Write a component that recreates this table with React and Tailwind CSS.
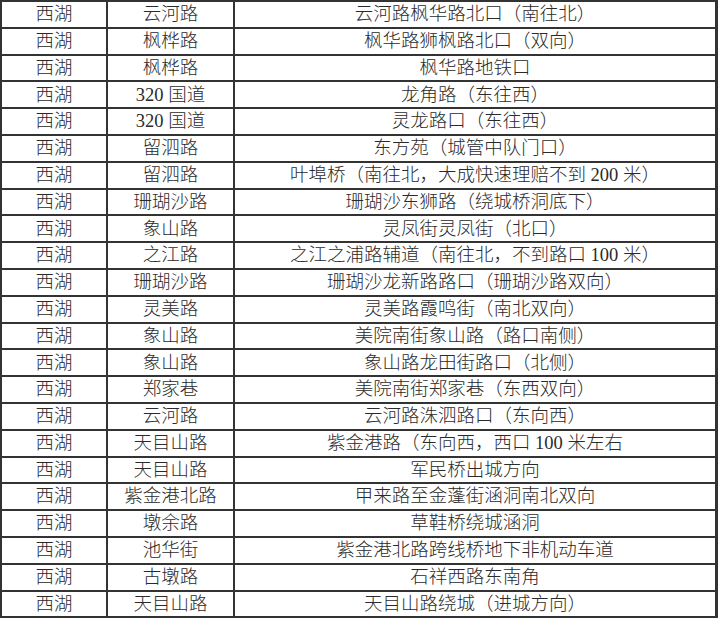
import React from 'react';

// 西湖区点位表
const rows = [
  ['西湖', '云河路', '云河路枫华路北口（南往北）'],
  ['西湖', '枫桦路', '枫华路狮枫路北口（双向）'],
  ['西湖', '枫桦路', '枫华路地铁口'],
  ['西湖', '320 国道', '龙角路（东往西）'],
  ['西湖', '320 国道', '灵龙路口（东往西）'],
  ['西湖', '留泗路', '东方苑（城管中队门口）'],
  ['西湖', '留泗路', '叶埠桥（南往北，大成快速理赔不到 200 米）'],
  ['西湖', '珊瑚沙路', '珊瑚沙东狮路（绕城桥洞底下）'],
  ['西湖', '象山路', '灵凤街灵凤街（北口）'],
  ['西湖', '之江路', '之江之浦路辅道（南往北，不到路口 100 米）'],
  ['西湖', '珊瑚沙路', '珊瑚沙龙新路路口（珊瑚沙路双向）'],
  ['西湖', '灵美路', '灵美路霞鸣街（南北双向）'],
  ['西湖', '象山路', '美院南街象山路（路口南侧）'],
  ['西湖', '象山路', '象山路龙田街路口（北侧）'],
  ['西湖', '郑家巷', '美院南街郑家巷（东西双向）'],
  ['西湖', '云河路', '云河路洙泗路口（东向西）'],
  ['西湖', '天目山路', '紫金港路（东向西，西口 100 米左右'],
  ['西湖', '天目山路', '军民桥出城方向'],
  ['西湖', '紫金港北路', '甲来路至金蓬街涵洞南北双向'],
  ['西湖', '墩余路', '草鞋桥绕城涵洞'],
  ['西湖', '池华街', '紫金港北路跨线桥地下非机动车道'],
  ['西湖', '古墩路', '石祥西路东南角'],
  ['西湖', '天目山路', '天目山路绕城（进城方向）'],
];

export default function App() {
  return (
    <div className="w-[720px] h-[620px] bg-white overflow-hidden font-['Liberation_Serif','Noto_Sans_CJK_SC',serif] font-light text-[18.5px] text-[#2a2a2a]">
      <div className="w-[718px] border-r-2 border-[#333]">
        <table className="w-[715px] table-fixed border-collapse">
          <colgroup>
            <col className="w-[106px]" />
            <col className="w-[127px]" />
            <col className="w-[482px]" />
          </colgroup>
          <tbody>
            {rows.map((r, i) => (
              <tr key={i} className="h-[26.8px]">
                {r.map((c, j) => (
                  <td key={j} className="border-2 border-[#333] p-0 text-center leading-none whitespace-nowrap">
                    {c}
                  </td>
                ))}
              </tr>
            ))}
          </tbody>
        </table>
      </div>
    </div>
  );
}
